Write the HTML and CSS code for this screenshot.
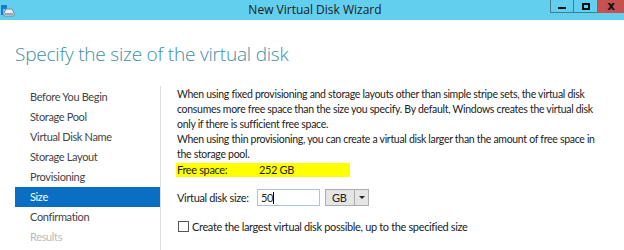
FILE: index.html
```html
<!DOCTYPE html>
<html lang="en">
<head>
    <meta charset="UTF-8">
    <title>New Virtual Disk Wizard</title>
    <link rel="stylesheet" href="styles.css">
</head>
<body>
    <div class="window">
        <div class="titlebar">
            <div class="app-icon">
                <svg width="14" height="14" viewBox="0 0 14 14">
                    <rect x="0" y="2" width="6" height="4" fill="#1e78d2"/>
                    <rect x="0" y="6" width="2" height="6" fill="#1e78d2"/>
                    <path d="M5 6h6l2 4v3H3v-3z" fill="#e8eef2" stroke="#7a8a96" stroke-width="1"/>
                    <rect x="4" y="10" width="8" height="2" fill="#9aa8b2"/>
                </svg>
            </div>
            <div class="title">New Virtual Disk Wizard</div>
            <div class="win-btns">
                <span class="wbtn min"><i></i></span>
                <span class="wbtn max"><i></i></span>
                <span class="wbtn close">x</span>
            </div>
        </div>

        <h1 class="heading">Specify the size of the virtual disk</h1>

        <div class="main">
            <ul class="steps">
                <li>Before You Begin</li>
                <li>Storage Pool</li>
                <li>Virtual Disk Name</li>
                <li>Storage Layout</li>
                <li>Provisioning</li>
                <li class="active">Size</li>
                <li>Confirmation</li>
                <li class="disabled">Results</li>
            </ul>
            <div class="content">
                <p class="desc">When using fixed provisioning and storage layouts other than simple stripe sets, the virtual disk<br>consumes more free space than the size you specify. By default, Windows creates the virtual disk<br>only if there is sufficient free space.<br>When using thin provisioning, you can create a virtual disk larger than the amount of free space in<br>the storage pool.</p>
                <div class="free">
                    <span class="label">Free space:</span>
                    <span>252 GB</span>
                </div>
                <div class="size-row">
                    <span class="label">Virtual disk size:</span>
                    <span class="input">50<i class="caret"></i></span>
                    <span class="select">
                        <span class="sel-val">GB</span>
                        <span class="sel-arrow"></span>
                    </span>
                </div>
                <div class="check-row">
                    <span class="checkbox"></span>
                    <span>Create the largest virtual disk possible, up to the specified size</span>
                </div>
            </div>
        </div>
    </div>
</body>
</html>
```

FILE: styles.css
```css
*{
    margin: 0;
    padding: 0;
    box-sizing: border-box;
}
li{
    list-style: none;
}
body{
    background-color: #fff;
    font-family: "Lato", "Open Sans", sans-serif;
    color: #333;
    width: 624px;
    height: 250px;
    overflow: hidden;
}

/* title bar */
.titlebar{
    height: 20px;
    background-color: #63cfee;
    display: grid;
    grid-template-columns: 1fr auto 1fr;
    align-items: start;
}
.app-icon{
    padding: 1px 0 0 1px;
    height: 20px;
}
.title{
    font-family: "Open Sans", sans-serif;
    font-size: 12px;
    line-height: 20px;
    color: #1a1a1a;
    padding-left: 6px;
}
.win-btns{
    justify-self: end;
    display: flex;
}
.wbtn{
    height: 13px;
    border: 1px solid #3d7f93;
    border-top: none;
    display: flex;
    align-items: center;
    justify-content: center;
}
.wbtn.min{
    width: 24px;
}
.wbtn.min i{
    width: 8px;
    height: 2px;
    background-color: #111;
    margin-top: 4px;
}
.wbtn.max{
    width: 24px;
    border-left: none;
}
.wbtn.max i{
    width: 8px;
    height: 7px;
    border: 2px solid #111;
}
.wbtn.close{
    width: 26px;
    background-color: #c75050;
    border: none;
    color: #111;
    font-weight: bold;
    font-size: 12px;
    line-height: 13px;
    font-family: "DejaVu Sans", sans-serif;
}

/* heading */
.heading{
    font-family: "Open Sans", sans-serif;
    font-weight: 300;
    font-size: 19px;
    letter-spacing: -0.2px;
    color: #3b8fa7;
    padding: 22px 0 0 15px;
    height: 66px;
    line-height: 24px;
}

/* body */
.main{
    display: flex;
    padding-left: 15px;
}
.steps{
    width: 145px;
    padding-top: 1px;
}
.steps li{
    height: 20px;
    line-height: 20px;
    font-size: 11px;
    letter-spacing: -0.35px;
    padding-left: 15px;
    color: #444;
}
.steps .active{
    background-color: #0a6fc2;
    color: #fff;
}
.steps .disabled{
    color: #bbb;
}
.content{
    border-left: 1px solid #dcdcdc;
    padding-left: 16px;
    height: 164px;
    font-size: 11px;
    letter-spacing: -0.35px;
    color: #222;
}
.desc{
    font-size: 10.5px;
    letter-spacing: -0.3px;
    line-height: 15px;
    white-space: nowrap;
    padding-top: 1px;
}
.free{
    margin-top: 1px;
    width: 174px;
    height: 14px;
    line-height: 14px;
    background-color: #ffff00;
    display: flex;
    margin-left: -1px;
    padding-left: 1px;
}
.free .label{
    width: 82px;
}
.size-row{
    margin-top: 12px;
    display: flex;
    align-items: center;
    height: 17px;
    white-space: nowrap;
}
.size-row .label{
    width: 80px;
}
.input{
    width: 63px;
    height: 17px;
    border: 1px solid #abc4da;
    line-height: 15px;
    padding-left: 3px;
    display: flex;
    align-items: center;
}
.caret{
    width: 1px;
    height: 12px;
    background-color: #000;
}
.select{
    margin-left: 5px;
    display: flex;
    height: 17px;
    border: 1px solid #adadad;
    background-color: #e5e5e5;
}
.sel-val{
    width: 29px;
    padding-left: 6px;
    line-height: 15px;
    border-right: 1px solid #adadad;
}
.sel-arrow{
    width: 13px;
    display: flex;
    align-items: center;
    justify-content: center;
}
.sel-arrow::after{
    content: "";
    border-left: 3px solid transparent;
    border-right: 3px solid transparent;
    border-top: 3px solid #222;
}
.check-row{
    margin-top: 14px;
    display: flex;
    align-items: center;
    height: 12px;
}
.checkbox{
    width: 11px;
    height: 11px;
    border: 1px solid #555;
    margin-left: 1px;
    margin-right: 3px;
}
```
